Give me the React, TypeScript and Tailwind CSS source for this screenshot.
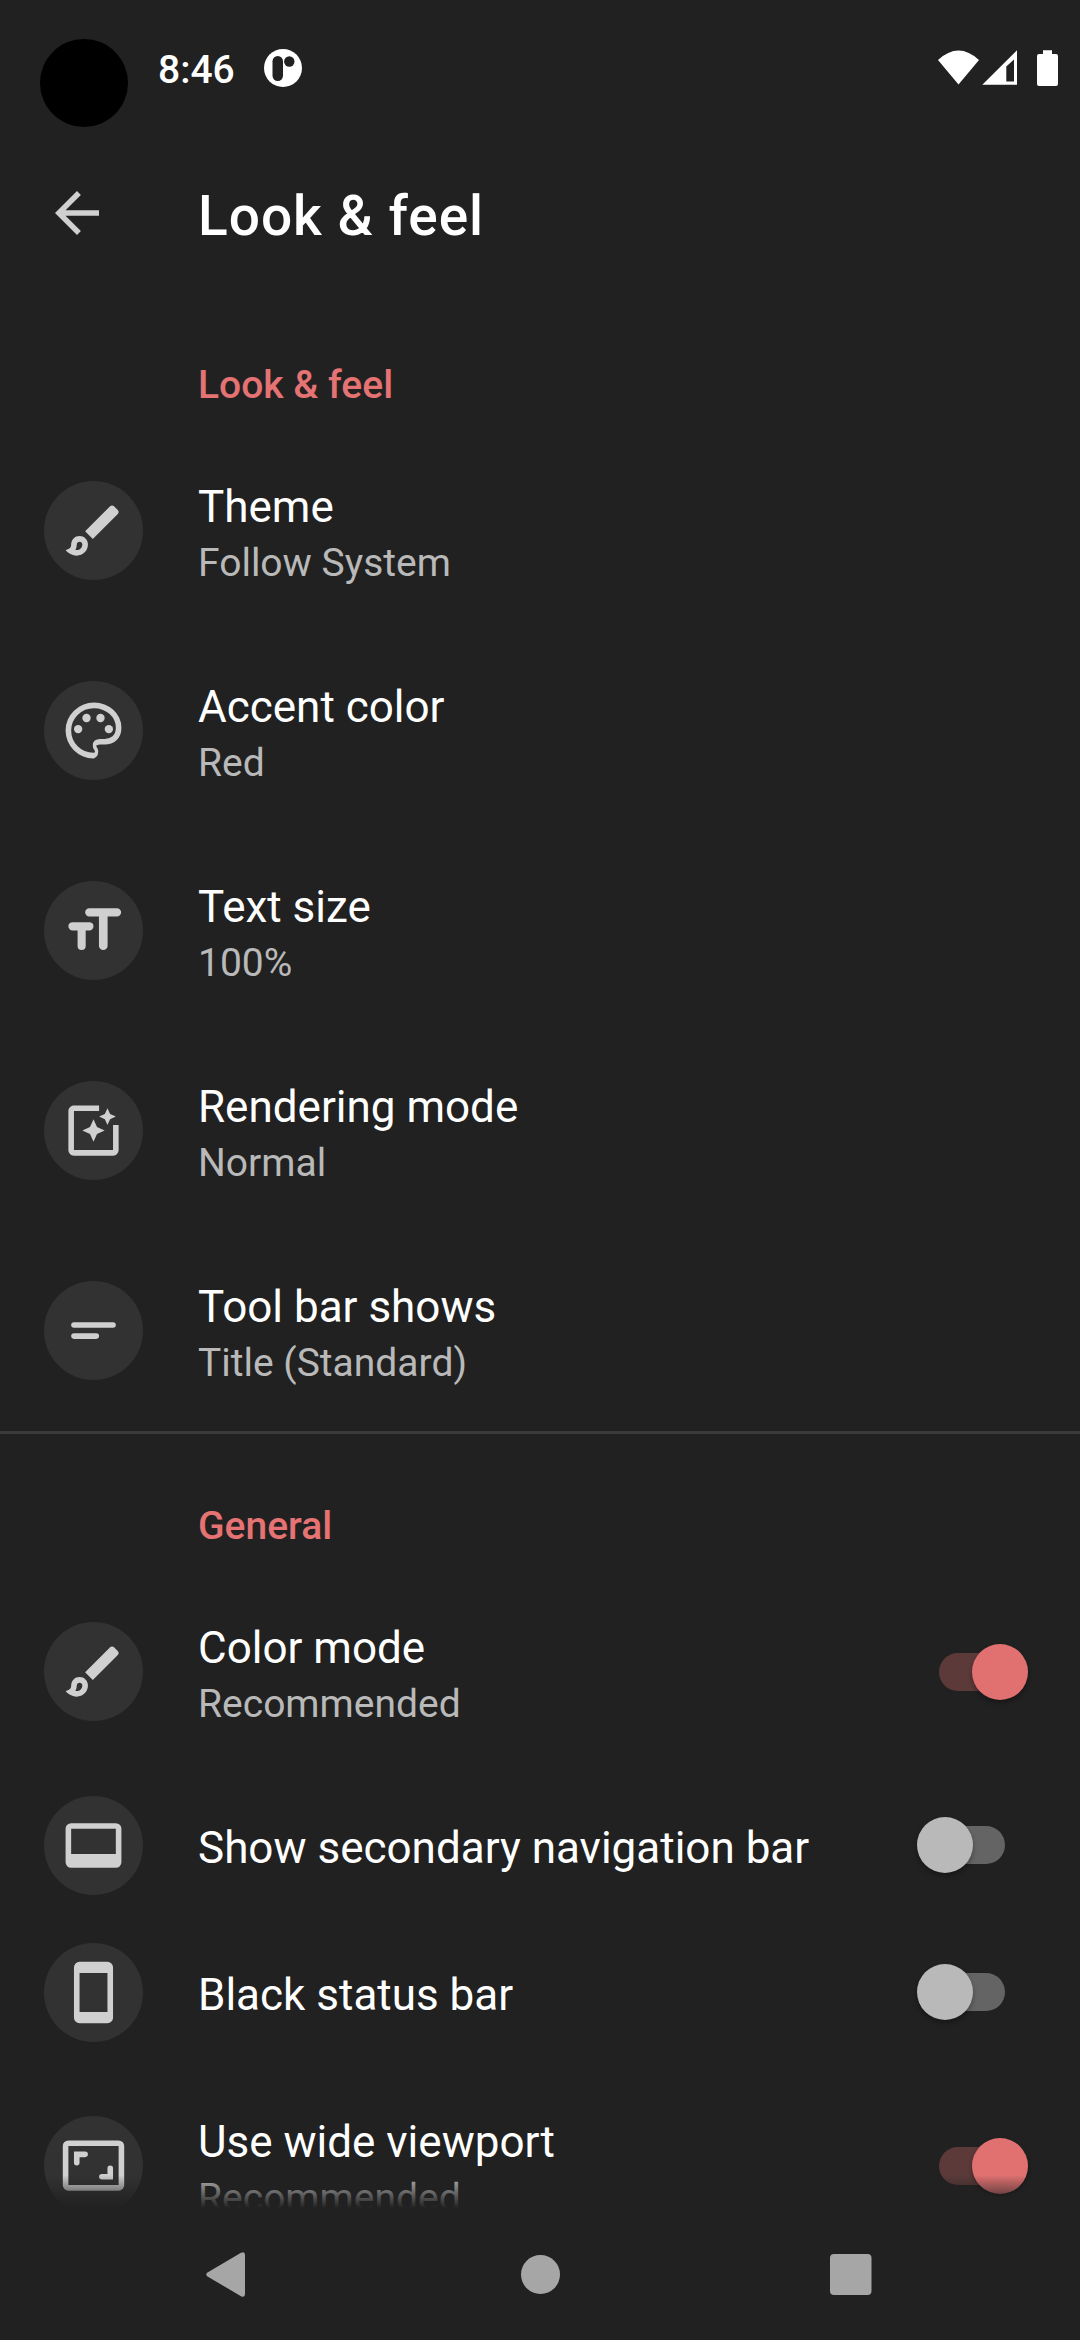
import React from "react";

const FG = "#d0d0d0";

const BrushIcon = () => (
  <svg viewBox="0 0 24 24" className="size-[67px]" fill={FG}>
    <path fillRule="evenodd" d="M6 21c-.75 0-1.49-.18-2.225-.55C3.042 20.080 2.450 19.600 2 19c.433 0 .875-.17 1.325-.513C3.775 18.146 4 17.650 4 17c0-.833.292-1.542.875-2.125S6.167 14 7 14s1.542.292 2.125.875S10 16.167 10 17c0 1.100-.392 2.042-1.175 2.825S7.100 21 6 21zm0-2c.55 0 1.020-.196 1.412-.587S8 17.550 8 17c0-.283-.096-.52-.287-.713S7.283 16 7 16s-.52.096-.713.287S6 16.717 6 17c0 .383-.046.733-.138 1.050s-.204.617-.337.900c.083.033.163.050.238.050zm5.750-4L9 12.250l8.950-8.950c.183-.183.413-.28.688-.287s.512.087.712.287l1.350 1.350c.2.2.3.433.3.700s-.1.500-.3.700z" />
  </svg>
);

const PaletteIcon = () => (
  <svg viewBox="0 0 24 24" className="size-[67px]" fill={FG}>
    <path d="M12 22q-2.050 0-3.875-.788t-3.188-2.150-2.150-3.187T2 12q0-2.075.813-3.900t2.200-3.175T8.250 2.788 12.200 2q2 0 3.775.688t3.113 1.900 2.125 2.875T22 11.050q0 2.875-1.750 4.413T16 17h-1.850q-.225 0-.312.125t-.88.275q0 .3.375.863t.375 1.287q0 1.250-.687 1.850T12 22m0-2q.225 0 .363-.125t.137-.325q0-.35-.375-.825T11.750 17.300q0-1.050.725-1.675T14.250 15H16q1.650 0 2.825-.962T20 11.050q0-3.025-2.312-5.037T12.200 4Q8.800 4 6.400 6.325T4 12q0 3.325 2.338 5.663T12 20" />
    <circle cx="6.500" cy="11.500" r="1.500" />
    <circle cx="9.500" cy="7.500" r="1.500" />
    <circle cx="14.500" cy="7.500" r="1.500" />
    <circle cx="17.500" cy="11.500" r="1.500" />
  </svg>
);

const TextSizeIcon = () => (
  <svg viewBox="0 0 24 24" className="size-[67px]" fill={FG}>
    <path d="M15.500 19a1.550 1.550 0 0 1-1.550-1.550V7H10.500a1.500 1.500 0 0 1 0-3h9.900a1.500 1.500 0 0 1 0 3H17.050v10.450a1.550 1.550 0 0 1-1.550 1.550zm-7.750 0A1.450 1.450 0 0 1 6.300 17.550V12H4.500a1.500 1.500 0 0 1 0-3h6a1.500 1.500 0 0 1 0 3H9.200v5.550A1.450 1.450 0 0 1 7.750 19z" />
  </svg>
);

const RenderingIcon = () => (
  <svg viewBox="0 0 24 24" className="size-[67px]" fill={FG}>
    <path d="M19 10v9H5V5h9V3H5c-1.100 0-2 .9-2 2v14c0 1.100.9 2 2 2h14c1.100 0 2-.9 2-2v-9zM17 10l.94-2.060L20 7l-2.060-.94L17 4l-.94 2.060L14 7l2.060.94zM13.250 10.750 12 8l-1.250 2.750L8 12l2.750 1.250L12 16l1.250-2.750L16 12z" />
  </svg>
);

const ShortTextIcon = () => (
  <svg viewBox="0 0 24 24" className="size-[67px]" fill={FG}>
    <rect x="4" y="9" width="16" height="2" rx="1" />
    <rect x="4" y="13" width="10" height="2" rx="1" />
  </svg>
);

const BottomBarIcon = () => (
  <svg viewBox="0 0 24 24" className="size-[67px]" fill={FG}>
    <path fillRule="evenodd" d="M4 4h16a2 2 0 0 1 2 2v12a2 2 0 0 1-2 2H4a2 2 0 0 1-2-2V6a2 2 0 0 1 2-2zM4 6v9h16V6z" />
  </svg>
);

const PhoneIcon = () => (
  <svg viewBox="0 0 24 24" className="size-[67px]" fill={FG}>
    <path fillRule="evenodd" d="M7 1h10a2 2 0 0 1 2 2v18a2 2 0 0 1-2 2H7a2 2 0 0 1-2-2V3a2 2 0 0 1 2-2zM7 5v14h10V5z" />
  </svg>
);

const AspectIcon = () => (
  <svg viewBox="0 0 24 24" className="size-[67px]" fill="none" stroke={FG} strokeWidth="2" strokeLinecap="round">
    <rect x="2" y="4" width="20" height="16" rx="1" />
    <path d="M6 11V8h3M18 13v3h-3" />
  </svg>
);

function Switch({ on }: { on: boolean }) {
  return (
    <div className="relative mr-[53px] h-[56px] w-[110px] shrink-0">
      <div className={`absolute left-[22px] top-[9px] h-[38px] w-[66px] rounded-full ${on ? "bg-[#5c3a3a]" : "bg-[#646464]"}`} />
      <div
        className={`absolute top-0 size-[56px] rounded-full shadow-[0_3px_5px_rgba(0,0,0,0.32)] ${
          on ? "left-[54.500px] bg-[#e17171]" : "left-0 bg-[#b9b9b9]"
        }`}
      />
    </div>
  );
}

type Item = { icon: React.ReactNode; title: string; summary?: string; on?: boolean };

function Row({ icon, title, summary, on }: Item) {
  return (
    <div className={`flex shrink-0 ${summary ? "h-[200px]" : "h-[147px]"}`}>
      <div className={`w-[198px] pl-[44px] ${summary ? "pt-[50px]" : "pt-[24px]"}`}>
        <div className="size-[99px] rounded-full bg-[#323232] p-[16px]">{icon}</div>
      </div>
      <div className="flex-1 whitespace-nowrap pt-[50px]">
        <div className="text-[44px] leading-[52px] text-white">{title}</div>
        {summary && <div className="mt-[7px] text-[39px] leading-[46px] text-[#b9b9b9]">{summary}</div>}
      </div>
      {on !== undefined && (
        <div className={summary ? "pt-[72px]" : "pt-[45px]"}>
          <Switch on={on} />
        </div>
      )}
    </div>
  );
}

function SectionHeader({ children }: { children: React.ReactNode }) {
  return (
    <div className="flex h-[138px] shrink-0 items-end pb-[23px] pl-[198px] text-[39px] font-medium leading-[46px] text-[#e57373]">
      {children}
    </div>
  );
}

const lookItems: Item[] = [
  { icon: <BrushIcon />, title: "Theme", summary: "Follow System" },
  { icon: <PaletteIcon />, title: "Accent color", summary: "Red" },
  { icon: <TextSizeIcon />, title: "Text size", summary: "100%" },
  { icon: <RenderingIcon />, title: "Rendering mode", summary: "Normal" },
  { icon: <ShortTextIcon />, title: "Tool bar shows", summary: "Title (Standard)" },
];

const generalItems: Item[] = [
  { icon: <BrushIcon />, title: "Color mode", summary: "Recommended", on: true },
  { icon: <BottomBarIcon />, title: "Show secondary navigation bar", on: false },
  { icon: <PhoneIcon />, title: "Black status bar", on: false },
  { icon: <AspectIcon />, title: "Use wide viewport", summary: "Recommended", on: true },
];

export default function App() {
  return (
    <div className="flex h-[2340px] w-[1080px] flex-col overflow-hidden bg-[#212121] font-['Roboto',sans-serif]">
      <header className="flex h-[136px] shrink-0 items-start">
        <div className="ml-[40px] mt-[39px] size-[88px] rounded-full bg-black" />
        <div className="ml-[30px] mt-[47px] w-[106px] text-[39px] font-medium leading-[46px] text-white">8:46</div>
        <svg viewBox="0 0 38 38" className="mt-[49px] size-[38px]">
          <circle cx="19" cy="19" r="19" fill="#fff" />
          <rect x="8.500" y="7" width="10.500" height="25" rx="5.200" fill="#212121" />
          <circle cx="25.300" cy="12.500" r="5.200" fill="#212121" />
        </svg>
        <svg viewBox="0 0 122 38" className="ml-auto mr-[20px] mt-[49px] h-[38px] w-[122px]" fill="#fff">
          <path d="M0 11Q20.500-8 41 11L20.500 35.500z" />
          <path fillRule="evenodd" d="M79 1.300V35.700H44.300zM76 10.500L68.300 17.500V32.500H76z" />
          <path d="M105 1.300h9V5h4a2 2 0 0 1 2 2v28a2 2 0 0 1-2 2h-17a2 2 0 0 1-2-2V7a2 2 0 0 1 2-2h4z" />
        </svg>
      </header>

      <div className="flex h-[157px] shrink-0 items-start">
        <svg viewBox="0 0 24 24" className="ml-[44px] mt-[44px] size-[66px]" fill={FG}>
          <path d="M20 11H7.830l5.590-5.590L12 4l-8 8 8 8 1.410-1.410L7.830 13H20z" />
        </svg>
        <h1 className="ml-[88px] mt-[48px] text-[55px] font-medium leading-[64px] tracking-[1px] text-white">Look &amp; feel</h1>
      </div>

      <main className="relative flex min-h-0 flex-1 flex-col overflow-hidden">
        <SectionHeader>Look &amp; feel</SectionHeader>
        {lookItems.map((item) => (
          <Row key={item.title} {...item} />
        ))}
        <div className="h-[3px] shrink-0 bg-[#3a3a3a]" />
        <SectionHeader>General</SectionHeader>
        {generalItems.map((item) => (
          <Row key={item.title} {...item} />
        ))}
        <div className="absolute inset-x-0 bottom-0 h-[33px] bg-linear-to-b from-[#212121]/0 to-[#212121]" />
      </main>

      <nav className="flex h-[132px] shrink-0 items-center">
        <svg viewBox="0 0 1080 132" className="h-[132px] w-[1080px]" fill="#a6a6a6">
          <path d="M207.500 64.500 241 44.800Q245 43 245 47V86Q245 90 241 88.200L207.500 68.500Q205 66.500 207.500 64.500z" />
          <circle cx="540.500" cy="66.500" r="19.500" />
          <rect x="830" y="46" width="41.500" height="41" rx="4" />
        </svg>
      </nav>
    </div>
  );
}
